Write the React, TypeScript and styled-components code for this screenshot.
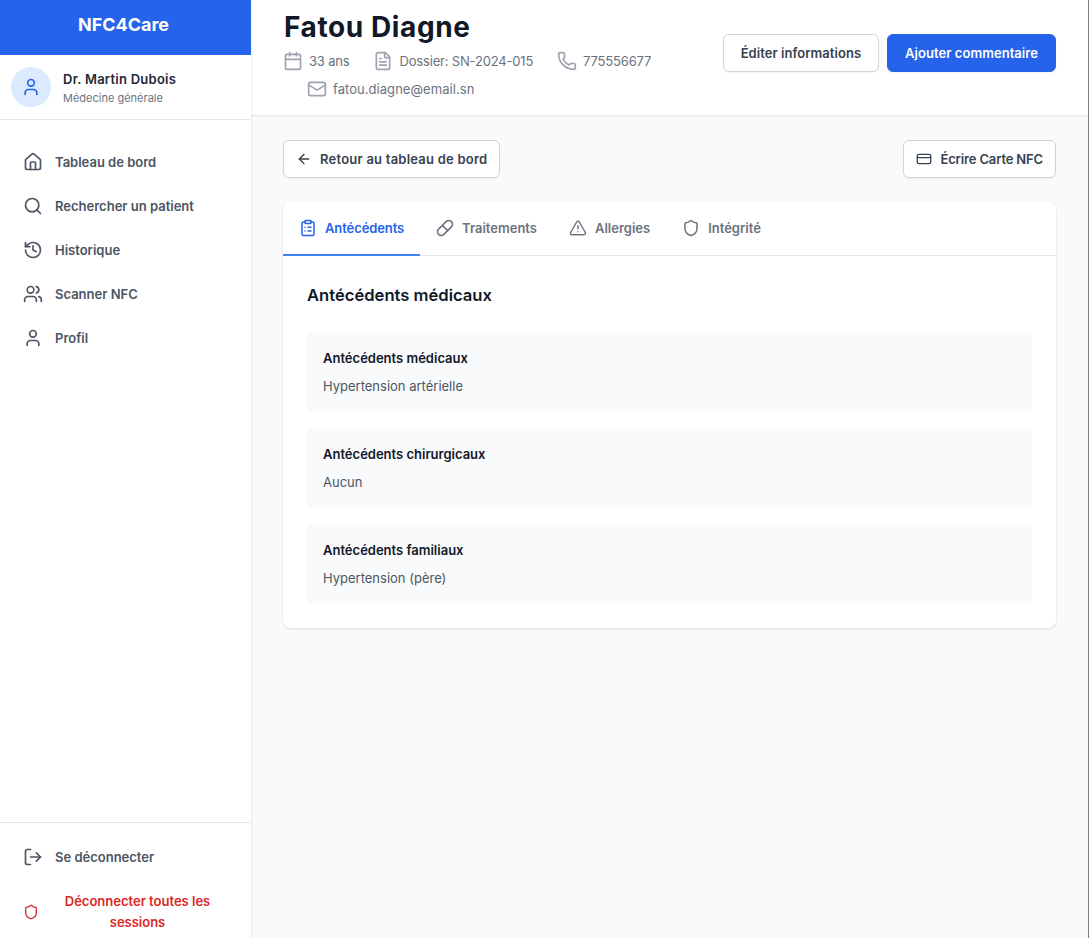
import React from "react";
import styled, { createGlobalStyle } from "styled-components";
import {
  ArrowLeft,
  Calendar,
  ClipboardList,
  CreditCard,
  FileText,
  History,
  House,
  LogOut,
  Mail,
  Phone,
  Pill,
  Search,
  Shield,
  TriangleAlert,
  User,
  Users,
} from "lucide-react";

const blue = "#2563eb";

const navItems = [
  { label: "Tableau de bord", icon: House },
  { label: "Rechercher un patient", icon: Search },
  { label: "Historique", icon: History },
  { label: "Scanner NFC", icon: Users },
  { label: "Profil", icon: User },
];

const tabs = [
  { label: "Antécédents", icon: ClipboardList, active: true },
  { label: "Traitements", icon: Pill },
  { label: "Allergies", icon: TriangleAlert },
  { label: "Intégrité", icon: Shield },
];

const records = [
  { title: "Antécédents médicaux", value: "Hypertension artérielle" },
  { title: "Antécédents chirurgicaux", value: "Aucun" },
  { title: "Antécédents familiaux", value: "Hypertension (père)" },
];

const App = () => (
  <>
    <GlobalStyle />
    <Page>
      <Sidebar>
        <Brand>NFC4Care</Brand>
        <DoctorCard>
          <Avatar>
            <User size={20} />
          </Avatar>
          <div>
            <DoctorName>Dr. Martin Dubois</DoctorName>
            <DoctorRole>Médecine générale</DoctorRole>
          </div>
        </DoctorCard>
        <Nav>
          {navItems.map(({ label, icon: Icon }) => (
            <NavItem key={label}>
              <Icon size={20} />
              {label}
            </NavItem>
          ))}
        </Nav>
        <SidebarFooter>
          <NavItem>
            <LogOut size={20} />
            Se déconnecter
          </NavItem>
          <DangerItem>
            <Shield size={16} />
            <DangerLabel>Déconnecter toutes les sessions</DangerLabel>
          </DangerItem>
        </SidebarFooter>
      </Sidebar>
      <Main>
        <Header>
          <PatientInfo>
            <PatientName>Fatou Diagne</PatientName>
            <MetaList>
              <MetaItem $tight>
                <Calendar size={20} />
                33 ans
              </MetaItem>
              <MetaItem $tight>
                <FileText size={20} />
                Dossier: SN-2024-015
              </MetaItem>
              <MetaItem $tight>
                <Phone size={20} />
                775556677
              </MetaItem>
              <MetaItem>
                <Mail size={20} />
                fatou.diagne@email.sn
              </MetaItem>
            </MetaList>
          </PatientInfo>
          <HeaderActions>
            <HeaderButton>Éditer informations</HeaderButton>
            <PrimaryButton>Ajouter commentaire</PrimaryButton>
          </HeaderActions>
        </Header>
        <Content>
          <Toolbar>
            <ToolbarButton $track={0.23}>
              <ArrowLeft size={16} />
              Retour au tableau de bord
            </ToolbarButton>
            <ToolbarButton $track={-0.15}>
              <CreditCard size={16} />
              Écrire Carte NFC
            </ToolbarButton>
          </Toolbar>
          <Card>
            <TabBar>
              {tabs.map(({ label, icon: Icon, active }) => (
                <Tab key={label} $active={active}>
                  <Icon size={18} />
                  {label}
                </Tab>
              ))}
            </TabBar>
            <CardBody>
              <SectionTitle>Antécédents médicaux</SectionTitle>
              <RecordList>
                {records.map((r) => (
                  <RecordBox key={r.title}>
                    <RecordTitle>{r.title}</RecordTitle>
                    <RecordValue>{r.value}</RecordValue>
                  </RecordBox>
                ))}
              </RecordList>
            </CardBody>
          </Card>
        </Content>
      </Main>
    </Page>
  </>
);

export default App;

const GlobalStyle = createGlobalStyle`
  * {
    box-sizing: border-box;
  }

  html, body {
    margin: 0;
    padding: 0;
    height: 100%;
  }

  body {
    font-family: Inter, "Noto Sans", sans-serif;
    background: #f9fafb;
    color: #111827;
  }
`;

const Page = styled.div`
  display: flex;
  height: 938px;
  overflow: hidden;
  border-right: 1px solid #777b82;
`;

const Sidebar = styled.aside`
  width: 251px;
  flex-shrink: 0;
  display: flex;
  flex-direction: column;
  background: #fff;
  box-shadow: 0 1px 3px rgba(0, 0, 0, 0.12);
  z-index: 2;
`;

const Brand = styled.div`
  height: 55px;
  display: flex;
  align-items: center;
  justify-content: center;
  background: ${blue};
  color: #fff;
  font-size: 18px;
  font-weight: 700;
  padding: 0 4px 6px 0;
`;

const DoctorCard = styled.div`
  height: 65px;
  display: flex;
  align-items: center;
  gap: 12px;
  padding: 0 11px;
  border-bottom: 1px solid #e5e7eb;
`;

const Avatar = styled.div`
  width: 40px;
  height: 40px;
  border-radius: 50%;
  display: flex;
  align-items: center;
  justify-content: center;
  background: #dbeafe;
  color: ${blue};
`;

const DoctorName = styled.div`
  margin-top: 1px;
  font-size: 13px;
  font-weight: 600;
  letter-spacing: 0.25px;
  line-height: 20px;
  color: #1f2937;
`;

const DoctorRole = styled.div`
  margin-top: 1px;
  font-size: 11px;
  line-height: 16px;
  color: #6b7280;
`;

const Nav = styled.nav`
  flex: 1;
  display: flex;
  flex-direction: column;
  padding: 20px 12px;
`;

const NavItem = styled.div`
  height: 44px;
  flex-shrink: 0;
  display: flex;
  align-items: center;
  gap: 12px;
  padding: 0 11px;
  font-size: 13px;
  font-weight: 600;
  color: #4b5563;

  svg {
    flex-shrink: 0;
  }
`;

const SidebarFooter = styled.div`
  height: 116px;
  flex-shrink: 0;
  display: flex;
  flex-direction: column;
  padding: 12px 12px 0;
  border-top: 1px solid #e5e7eb;
`;

const DangerItem = styled(NavItem)`
  height: 65px;
  color: #dc2626;
`;

const DangerLabel = styled.span`
  flex: 1;
  margin-right: 4px;
  text-align: center;
  line-height: 21px;
`;

const Main = styled.main`
  flex: 1;
  min-width: 0;
  display: flex;
  flex-direction: column;
`;

const Header = styled.header`
  height: 115px;
  display: flex;
  justify-content: space-between;
  align-items: center;
  padding: 0 32px 9px;
  background: #fff;
  box-shadow: 0 1px 2px rgba(0, 0, 0, 0.1);
`;

const PatientInfo = styled.div`
  min-width: 0;
  margin-top: 2px;
`;

const PatientName = styled.h1`
  margin: 0 0 6px;
  padding-left: 1px;
  font-size: 28px;
  font-weight: 700;
  letter-spacing: 0.6px;
  line-height: 36px;
  color: #111827;
`;

const MetaList = styled.div`
  display: flex;
  flex-wrap: wrap;
  row-gap: 8px;
`;

const MetaItem = styled.div<{ $tight?: boolean }>`
  display: flex;
  align-items: center;
  gap: 6px;
  margin-left: 24px;
  font-size: 13px;
  letter-spacing: ${(p) => (p.$tight ? "-0.18px" : "0.05px")};
  line-height: 20px;
  color: #6b7280;

  &:first-child {
    margin-left: 0;
  }

  svg {
    color: #9ca3af;
  }
`;

const HeaderActions = styled.div`
  display: flex;
  gap: 8px;
  flex-shrink: 0;
`;

const Button = styled.button`
  height: 38px;
  display: inline-flex;
  align-items: center;
  gap: 8px;
  padding: 0 17px;
  border: 1px solid #d1d5db;
  border-radius: 6px;
  background: #fff;
  font-family: inherit;
  font-size: 13px;
  font-weight: 600;
  color: #374151;
  box-shadow: 0 1px 2px rgba(0, 0, 0, 0.05);
`;

const HeaderButton = styled(Button)`
  letter-spacing: 0.05px;
`;

const PrimaryButton = styled(Button)`
  border-color: ${blue};
  background: ${blue};
  color: #fff;
  letter-spacing: 0.05px;
`;

const ToolbarButton = styled(Button)<{ $track: number }>`
  padding: 0 12px;
  letter-spacing: ${(p) => p.$track}px;
`;

const Content = styled.div`
  flex: 1;
  padding: 25px 32px 0;
`;

const Toolbar = styled.div`
  display: flex;
  justify-content: space-between;
  margin-bottom: 24px;
`;

const Card = styled.section`
  background: #fff;
  border-radius: 8px;
  box-shadow: 0 1px 3px rgba(0, 0, 0, 0.12);
`;

const TabBar = styled.div`
  display: flex;
  border-bottom: 1px solid #e5e7eb;
`;

const Tab = styled.div<{ $active?: boolean }>`
  height: 54px;
  display: flex;
  align-items: center;
  gap: 8px;
  padding: 0 16px;
  font-size: 13px;
  font-weight: 600;
  letter-spacing: ${(p) => (p.$active ? "-0.1px" : "0")};
  color: ${(p) => (p.$active ? blue : "#6b7280")};
  border-bottom: 2px solid ${(p) => (p.$active ? "#3b82f6" : "transparent")};
  margin-bottom: -1px;
`;

const CardBody = styled.div`
  padding: 24px;
`;

const SectionTitle = styled.h2`
  margin: 0 0 24px;
  padding-top: 2px;
  font-size: 16.6px;
  font-weight: 600;
  line-height: 26px;
  color: #111827;
`;

const RecordList = styled.div`
  display: flex;
  flex-direction: column;
  gap: 16px;
`;

const RecordBox = styled.div`
  height: 80px;
  padding: 16px;
  border-radius: 6px;
  background: #f9fafb;
`;

const RecordTitle = styled.div`
  font-size: 13px;
  font-weight: 600;
  line-height: 20px;
  margin-bottom: 8px;
  color: #111827;
`;

const RecordValue = styled.div`
  font-size: 13px;
  line-height: 20px;
  color: #4b5563;
`;
